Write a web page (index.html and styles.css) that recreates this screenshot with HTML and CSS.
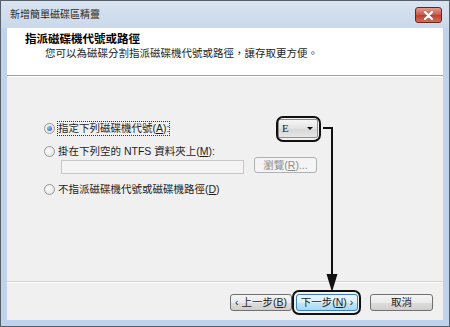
FILE: index.html
```html
<!DOCTYPE html>
<html lang="zh-TW">
<head>
    <meta charset="UTF-8">
    <title>新增簡單磁碟區精靈</title>
    <link rel="stylesheet" href="styles.css">
</head>
<body>
    <div class="window">
        <div class="titlebar">
            <span class="title">新增簡單磁碟區精靈</span>
            <span class="close">
                <svg width="11" height="9" viewBox="0 0 11 9">
                    <path d="M2 1 L9 8 M9 1 L2 8" stroke="#fff" stroke-width="2.2" stroke-linecap="round"/>
                </svg>
            </span>
        </div>

        <div class="client">
            <div class="header">
                <div class="heading">指派磁碟機代號或路徑</div>
                <div class="subheading">您可以為磁碟分割指派磁碟機代號或路徑，讓存取更方便。</div>
            </div>

            <div class="content">
                <div class="row row-drive">
                    <label class="option">
                        <span class="radio checked"></span>
                        <span class="focus-text">指定下列磁碟機代號(<u>A</u>):</span>
                    </label>
                    <div class="select callout">
                        <span>E</span>
                        <span class="caret"></span>
                    </div>
                </div>
                <div class="row row-mount">
                    <label class="option">
                        <span class="radio"></span>
                        <span>掛在下列空的 NTFS 資料夾上(<u>M</u>):</span>
                    </label>
                </div>
                <div class="row row-path">
                    <div class="textbox"></div>
                    <button class="btn btn-browse" disabled>瀏覽(<u>R</u>)...</button>
                </div>
                <div class="row row-none">
                    <label class="option">
                        <span class="radio"></span>
                        <span>不指派磁碟機代號或磁碟機路徑(<u>D</u>)</span>
                    </label>
                </div>
            </div>

            <div class="footer">
                <button class="btn btn-back">‹ 上一步(<u>B</u>)</button>
                <button class="btn btn-next callout">下一步(<u>N</u>) ›</button>
                <button class="btn btn-cancel">取消</button>
            </div>
        </div>

        <!-- 說明用的箭頭 -->
        <svg class="pointer" width="450" height="327" viewBox="0 0 450 327">
            <path d="M323 128 H332 V276" fill="none" stroke="#111" stroke-width="2"/>
            <polygon points="326.5,274 337.5,274 332,292" fill="#111"/>
        </svg>
    </div>
</body>
</html>
```

FILE: styles.css
```css
body {
    margin: 0;
    font-family: 'Liberation Sans', 'Noto Sans CJK TC', sans-serif;
    color: #1e1e1e;
}
.window {
    position: relative;
    width: 450px;
    height: 327px;
    box-sizing: border-box;
    border: 1px solid #55606c;
    background-color: #bfd4ec;
    padding: 0 6px 6px 6px;
    display: flex;
    flex-direction: column;
}
.titlebar {
    height: 27px;
    margin: 0 -6px;
    padding: 0 7px 0 9px;
    display: flex;
    align-items: flex-start;
    justify-content: space-between;
    background: linear-gradient(#d9e4f0, #c9d8ea);
}
.title {
    font-size: 10px;
    line-height: 12px;
    margin-top: 8px;
    color: #2a2a2a;
}
.close {
    width: 27px;
    height: 16px;
    margin-top: 6px;
    box-sizing: border-box;
    border: 1px solid #5b2a24;
    border-radius: 3px;
    background: linear-gradient(#e49c8c, #c9574a 50%, #b9402f 51%, #d36f5c);
    display: flex;
    align-items: center;
    justify-content: center;
}
.client {
    flex: 1;
    display: flex;
    flex-direction: column;
    background-color: #f0f0f0;
}
.header {
    height: 48px;
    box-sizing: border-box;
    padding: 4px 0 0 18px;
    background-color: #fff;
    border-bottom: 1px solid #a0a0a0;
    box-shadow: 0 1px 0 #fff;
}
.heading {
    font-size: 11.5px;
    line-height: 14px;
    font-weight: bold;
    color: #000;
}
.subheading {
    font-size: 10.5px;
    line-height: 14px;
    padding-left: 20px;
}
.content {
    height: 206px;
    box-sizing: border-box;
    padding: 42px 0 0 37px;
    border-bottom: 1px solid #d5d5d5;
}
.row {
    display: flex;
    align-items: center;
}
.row-drive {
    width: 274px;
    height: 20px;
    justify-content: space-between;
}
.row-mount {
    height: 14px;
    margin-top: 6px;
}
.row-path {
    height: 17px;
    margin-top: -1px;
    padding-left: 17px;
    align-items: flex-end;
}
.row-none {
    height: 14px;
    margin-top: 8px;
}
.option {
    display: flex;
    align-items: center;
    gap: 3px;
    font-size: 10.5px;
    line-height: 13px;
    white-space: nowrap;
}
.focus-text {
    outline: 1px dotted #333;
    outline-offset: 0;
}
.radio {
    width: 11px;
    height: 11px;
    box-sizing: border-box;
    border: 1px solid #9a9a9a;
    border-radius: 50%;
    background: radial-gradient(circle at 40% 40%, #fff, #dcdcdc);
    display: flex;
    align-items: center;
    justify-content: center;
}
.radio.checked::before {
    content: '';
    width: 5px;
    height: 5px;
    border-radius: 50%;
    background: radial-gradient(circle at 35% 35%, #8fc1f2, #1f5fae);
}
.select {
    position: relative;
    width: 40px;
    height: 19px;
    box-sizing: border-box;
    border: 1px solid #8c8c8c;
    border-radius: 2px;
    background: linear-gradient(#f6f6f6, #e2e2e2 50%, #d6d6d6 51%, #e6e6e6);
    display: flex;
    align-items: center;
    justify-content: space-between;
    padding: 0 4px 0 3px;
    font-family: 'Liberation Serif', serif;
    font-size: 11px;
}
.caret {
    width: 0;
    height: 0;
    border-left: 3px solid transparent;
    border-right: 3px solid transparent;
    border-top: 3px solid #111;
}
.callout::after {
    content: '';
    position: absolute;
    inset: -4px -4px -5px -3px;
    border: 2.5px solid #111;
    border-radius: 7px;
}
.textbox {
    width: 183px;
    height: 14px;
    box-sizing: border-box;
    border: 1px solid #c8c8c8;
    background-color: #f4f4f4;
}
.btn {
    position: relative;
    height: 17px;
    box-sizing: border-box;
    border: 1px solid #707070;
    border-radius: 3px;
    background: linear-gradient(#f4f4f4, #ebebeb 50%, #dddddd 51%, #cfcfcf);
    font-family: inherit;
    font-size: 10.5px;
    line-height: 13px;
    color: #1e1e1e;
    padding: 0;
}
.btn-browse {
    width: 63px;
    height: 16px;
    margin: 0 0 1px 10px;
    border-color: #adb2b5;
    background: #f4f4f4;
    color: #8d8d8d;
}
.footer {
    flex: 1;
    border-top: 1px solid #fff;
    display: flex;
    justify-content: flex-end;
    align-items: flex-start;
    padding: 11px 10px 0 0;
}
.btn-back {
    width: 62px;
}
.btn-next {
    width: 62px;
    margin-left: 4px;
    border-color: #3c7fb1;
    background: linear-gradient(#eaf6fd, #d9f0fc 50%, #bee6fd 51%, #a7d9f5);
}
.btn-next::after {
    inset: -5px -4px -5px -5px;
}
.btn-cancel {
    width: 63px;
    margin-left: 12px;
}
.pointer {
    position: absolute;
    left: -1px;
    top: -1px;
    pointer-events: none;
}
```
